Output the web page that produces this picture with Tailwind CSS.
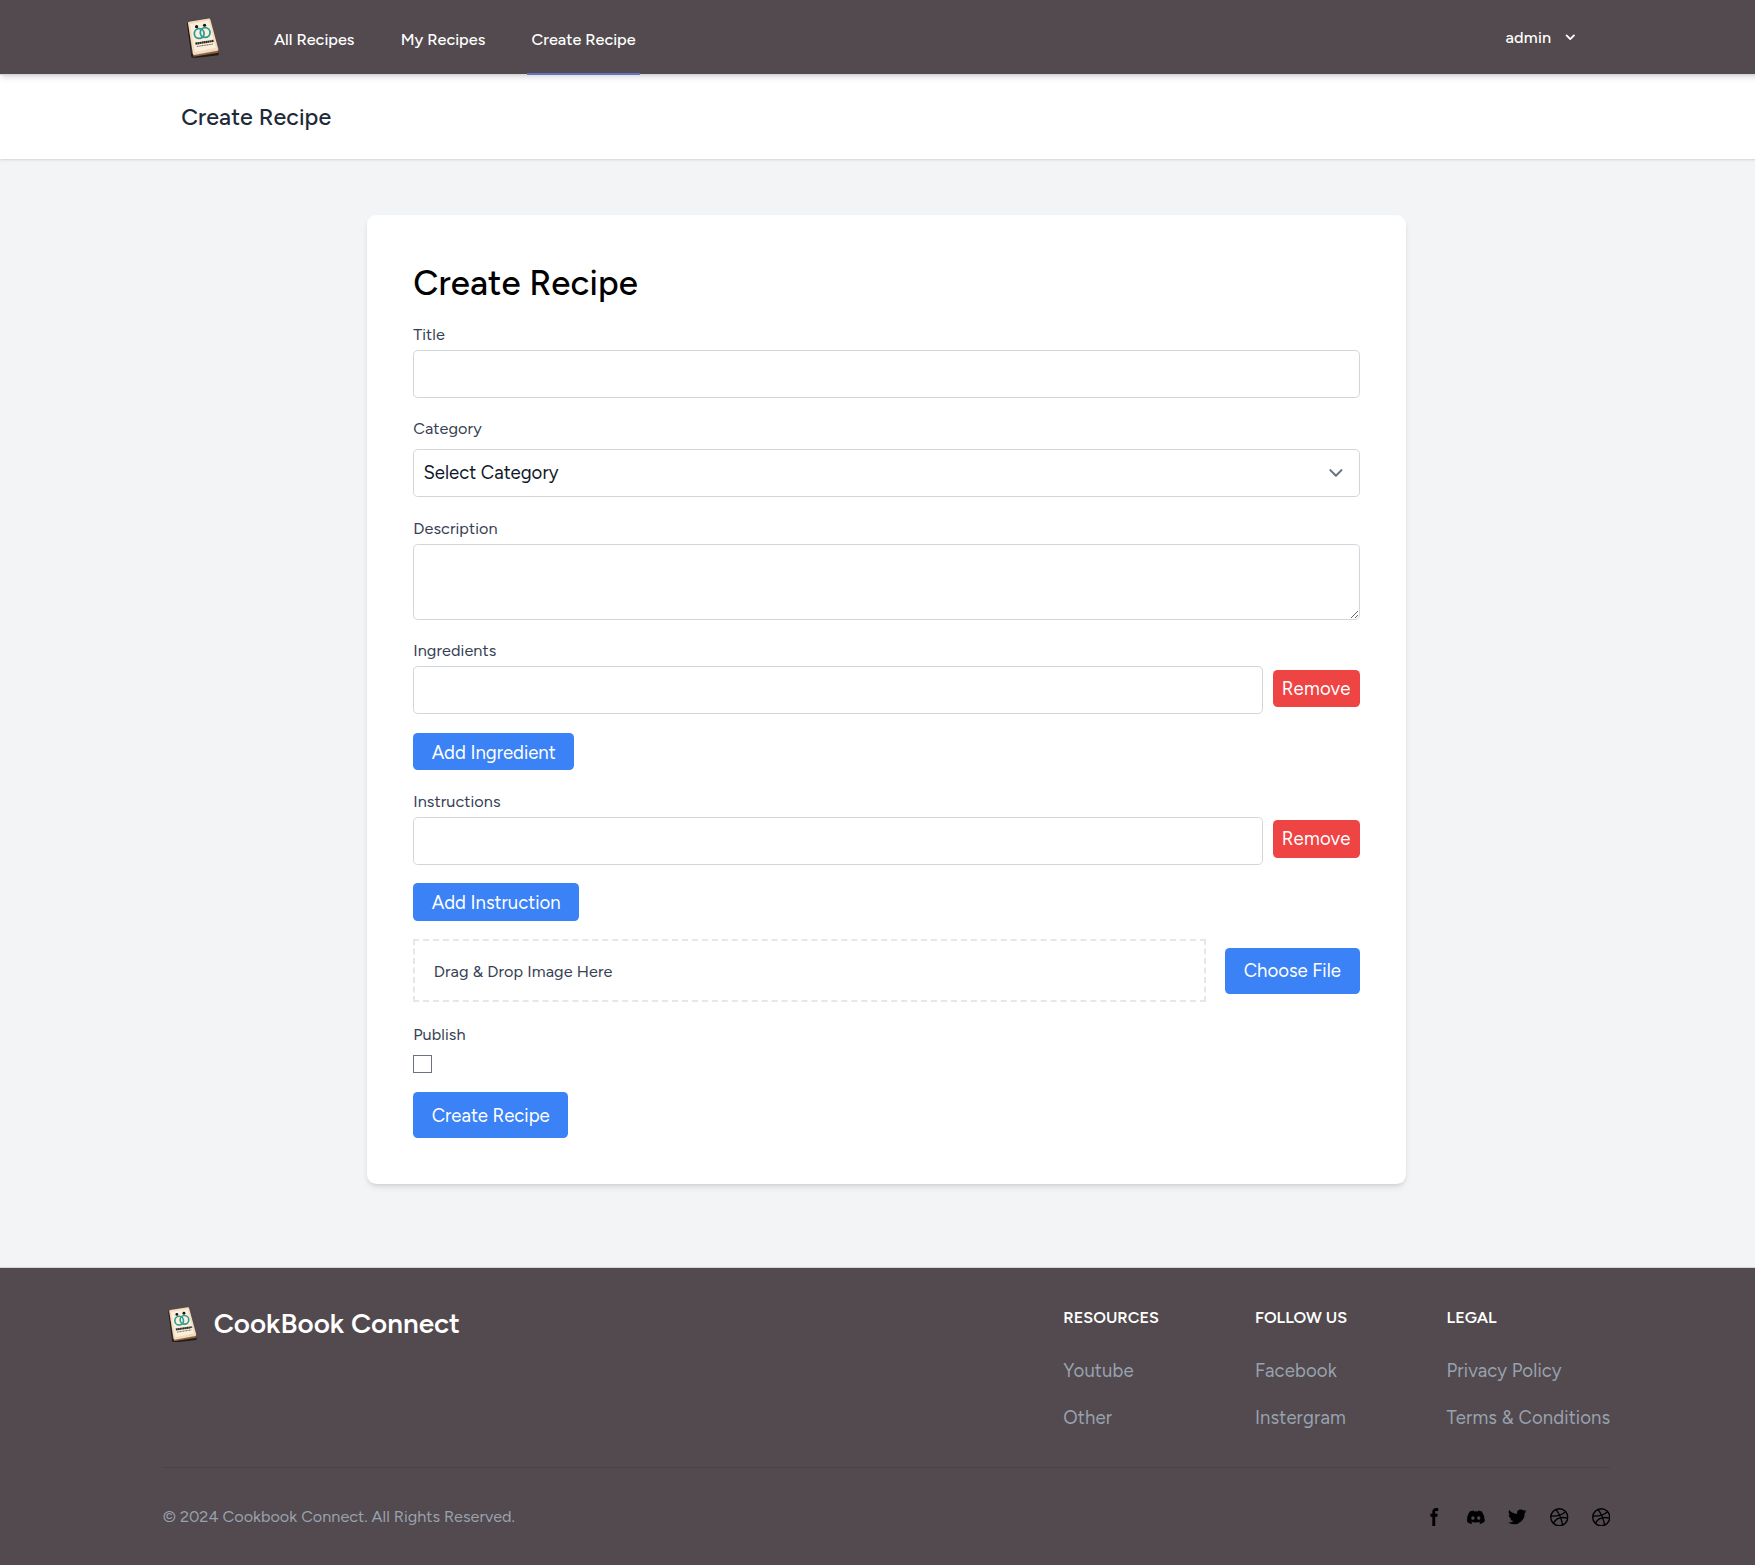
<!DOCTYPE html>
<html lang="en" class="text-[18.56px] overflow-hidden">
<head>
<meta charset="utf-8">
<title>Create Recipe</title>
<script src="https://cdn.jsdelivr.net/npm/@tailwindcss/browser@4"></script>
</head>
<body class="w-[1773px] bg-gray-100 text-black font-['Figtree',Lato,sans-serif]">
<svg class="hidden">
  <symbol id="book" viewBox="0 -1.500 42 42">
    <path d="M6 6 7.300 4.500 11 37 34 32 38.400 35 37.700 38 12.500 41 10.500 40Z" fill="#241b18"/>
    <path d="M12 37.500 37.500 33 37.800 35.500 12.500 39.500Z" fill="#8a633c"/>
    <path d="M7 5.500Q7 4.400 8.200 4.200L28 1Q29.200.8 29.500 2L37.600 32Q37.800 33.200 36.600 33.500L13.500 37.800Q12.300 38 12 36.800Z" fill="#f3dcbd"/>
    <path d="M9 6.500 28 3 35 30.500 14 35Z" fill="#fbeedb"/>
    <g fill="none" stroke="#2a9d95" stroke-width="1.800"><circle cx="18.300" cy="16.200" r="4.900"/><circle cx="24.300" cy="15.200" r="4.900"/></g>
    <circle cx="15.700" cy="9.200" r="1.600" fill="#151515"/><circle cx="23.700" cy="7.800" r="1.600" fill="#151515"/>
    <path d="M14.500 26.300 33 23.500" stroke="#2c2a27" stroke-width="2.200" stroke-dasharray="1.800 .25"/>
    <path d="M16 29.200 32 26.700" stroke="#6b6257" stroke-width="1.100" stroke-dasharray="1.200 .5"/>
  </symbol>
  <symbol id="ball" viewBox="0 0 20 20">
    <g fill="none" stroke="currentColor" stroke-width="1.500"><circle cx="10" cy="10" r="9.200"/><path d="M6.500 1.700C9.500 5.300 12.400 11.500 13.600 18.300M.9 8.700C7.500 8.900 13.500 7.500 16.800 3.900M3.600 16.500C6.500 11.200 12.500 9.300 19 10.900"/></g>
  </symbol>
</svg>

<nav class="relative bg-[#524a4e] border-b border-gray-300 shadow-md">
  <div class="max-w-7xl mx-auto px-8 h-16 flex justify-between">
    <div class="flex">
      <a class="flex items-center"><svg class="size-9"><use href="#book"/></svg></a>
      <div class="flex ml-10 gap-8 text-sm font-medium text-white -mb-px">
        <a class="flex items-center px-1 pt-[5px] border-b-2 border-transparent">All Recipes</a>
        <a class="flex items-center px-1 pt-[5px] border-b-2 border-transparent">My Recipes</a>
        <a class="flex items-center px-1 pt-[5px] border-b-2 border-[#6b6fc4]">Create Recipe</a>
      </div>
    </div>
    <button class="flex items-center pl-3 pr-[12px] text-sm font-medium text-white tracking-[0.01em]">admin
      <svg class="size-4 ml-[10px]" viewBox="0 0 20 20" fill="currentColor"><path fill-rule="evenodd" clip-rule="evenodd" d="M5.293 7.293a1 1 0 011.414 0L10 10.586l3.293-3.293a1 1 0 111.414 1.414l-4 4a1 1 0 01-1.414 0l-4-4a1 1 0 010-1.414z"/></svg>
    </button>
  </div>
</nav>

<header class="bg-white shadow-sm">
  <div class="max-w-7xl mx-auto pt-6 pb-[27px] px-8">
    <h2 class="text-xl leading-tight font-medium text-gray-800 tracking-[0.005em]">Create Recipe</h2>
  </div>
</header>

<main class="pt-[56px] pb-[82.500px]">
  <form class="max-w-4xl mx-auto bg-white rounded-lg shadow-md px-10 pt-[48px] pb-10 flex flex-col gap-4">
    <h1 class="-mb-[1.500px] text-3xl font-medium tracking-[0.004em]">Create Recipe</h1>
    <div>
      <label class="block pt-px text-sm text-gray-700 tracking-[0.005em]">Title</label>
      <input class="block mt-[3.500px] w-full p-2 border border-gray-300 rounded">
    </div>
    <div>
      <label class="block pt-px text-sm text-gray-700 tracking-[0.005em]">Category</label>
      <div class="mt-[8.300px] grid items-center">
        <select class="col-start-1 row-start-1 appearance-none w-full p-2 bg-white text-gray-900 border border-gray-300 rounded"><option>Select Category</option></select>
        <svg class="col-start-1 row-start-1 justify-self-end size-6 mr-[10px] text-gray-500" viewBox="0 0 20 20" fill="none" stroke="currentColor" stroke-width="1.500" stroke-linecap="round" stroke-linejoin="round"><path d="M6 8l4 4 4-4"/></svg>
      </div>
    </div>
    <div>
      <label class="block pt-px text-sm text-gray-700 tracking-[0.005em]">Description</label>
      <textarea rows="2" class="block mt-[3.700px] w-full p-2 border border-gray-300 rounded"></textarea>
    </div>
    <div>
      <label class="block pt-px text-sm text-gray-700 tracking-[0.005em]">Ingredients</label>
      <div class="mt-[3.500px] flex items-center gap-2">
        <input class="min-w-0 flex-1 p-2 border border-gray-300 rounded">
        <button class="mb-[3.500px] px-2 py-1 bg-[#ef4444] text-white rounded tracking-[0.01em]">Remove</button>
      </div>
      <button class="mt-4 block w-[161px] pt-[5.500px] pb-[3.800px] bg-[#3b82f6] text-white rounded">Add Ingredient</button>
    </div>
    <div>
      <label class="block pt-px text-sm text-gray-700 tracking-[0.005em]">Instructions</label>
      <div class="mt-[3.700px] flex items-center gap-2">
        <input class="min-w-0 flex-1 p-2 border border-gray-300 rounded">
        <button class="mb-[3.500px] px-2 py-1 bg-[#ef4444] text-white rounded tracking-[0.01em]">Remove</button>
      </div>
      <button class="mt-4 block w-[166px] pt-[5.500px] pb-[3.800px] bg-[#3b82f6] text-white rounded">Add Instruction</button>
    </div>
    <div class="flex items-center gap-4">
      <div class="flex-1 pt-[19px] pb-[17px] px-4 border-2 border-dashed border-gray-200 text-sm text-gray-700 tracking-[0.005em]">Drag &amp; Drop Image Here</div>
      <button class="mt-px w-[135px] py-2 bg-[#3b82f6] text-white rounded">Choose File</button>
    </div>
    <div>
      <label class="block pt-[2px] text-sm text-gray-700 tracking-[0.005em]">Publish</label>
      <input type="checkbox" class="block mt-[8.500px] appearance-none size-4 bg-white border border-gray-500">
    </div>
    <button class="self-start w-[155px] pt-[10px] pb-[8.600px] bg-[#3b82f6] text-white rounded">Create Recipe</button>
  </form>
</main>

<footer class="bg-[#524a4e] border-t border-gray-300">
  <div class="max-w-7xl mx-auto px-4 py-8">
    <div class="flex justify-between">
      <a class="flex items-center self-start"><svg class="size-8"><use href="#book"/></svg><span class="ml-3 text-2xl font-semibold text-white">CookBook Connect</span></a>
      <div class="pt-px grid grid-cols-3 gap-6 w-[547px]">
        <div>
          <h2 class="mb-6 text-sm font-semibold text-white uppercase">Resources</h2>
          <ul class="flex flex-col gap-4 text-gray-400 tracking-[0.006em]"><li>Youtube</li><li>Other</li></ul>
        </div>
        <div>
          <h2 class="mb-6 text-sm font-semibold text-white uppercase">Follow us</h2>
          <ul class="flex flex-col gap-4 text-gray-400 tracking-[0.006em]"><li>Facebook</li><li>Instergram</li></ul>
        </div>
        <div class="whitespace-nowrap">
          <h2 class="mb-6 text-sm font-semibold text-white uppercase">Legal</h2>
          <ul class="flex flex-col gap-4 text-gray-400 tracking-[0.006em]"><li>Privacy Policy</li><li>Terms &amp; Conditions</li></ul>
        </div>
      </div>
    </div>
    <hr class="mt-[36px] mb-8 border-[#49434b]">
    <div class="flex items-center justify-between">
      <span class="text-sm text-gray-400">© 2024 Cookbook Connect. All Rights Reserved.</span>
      <div class="flex gap-5">
        <svg class="size-4" viewBox="0 0 8 19"><path d="M6.135 3H8V0H6.135a4.147 4.147 0 0 0-4.142 4.142V6H0v3h2v9.938h3V9h2.021l.592-3H5V3.591A.6.6 0 0 1 5.592 3h.543Z"/></svg>
        <svg class="size-4" viewBox="0 0 21 16"><path d="M16.942 1.556a16.3 16.3 0 0 0-4.126-1.3 12.04 12.04 0 0 0-.529 1.1 15.175 15.175 0 0 0-4.573 0 11.585 11.585 0 0 0-.535-1.1 16.274 16.274 0 0 0-4.129 1.3A17.392 17.392 0 0 0 .182 13.218a15.785 15.785 0 0 0 4.963 2.521c.41-.564.773-1.16 1.084-1.785a10.63 10.63 0 0 1-1.706-.83c.143-.106.283-.217.418-.33a11.664 11.664 0 0 0 10.118 0c.137.113.277.224.418.33-.544.328-1.116.606-1.71.832a12.52 12.52 0 0 0 1.084 1.785 16.46 16.46 0 0 0 5.064-2.595 17.286 17.286 0 0 0-2.973-11.39ZM6.678 10.813a1.941 1.941 0 0 1-1.800-2.045 1.930 1.930 0 0 1 1.800-2.047 1.919 1.919 0 0 1 1.800 2.047 1.930 1.930 0 0 1-1.800 2.045Zm6.644 0a1.940 1.940 0 0 1-1.800-2.045 1.930 1.930 0 0 1 1.800-2.047 1.918 1.918 0 0 1 1.800 2.047 1.930 1.930 0 0 1-1.800 2.045Z"/></svg>
        <svg class="size-4" viewBox="0 0 20 17"><path d="M20 1.892a8.178 8.178 0 0 1-2.355.635 4.074 4.074 0 0 0 1.800-2.235 8.344 8.344 0 0 1-2.605.98A4.130 4.130 0 0 0 13.850 0a4.068 4.068 0 0 0-4.100 4.038 4 4 0 0 0 .105.919A11.705 11.705 0 0 1 1.400.734a4.006 4.006 0 0 0 1.268 5.392 4.165 4.165 0 0 1-1.859-.5v.05A4.057 4.057 0 0 0 4.100 9.635a4.190 4.190 0 0 1-1.856.07 4.108 4.108 0 0 0 3.831 2.807A8.360 8.360 0 0 1 0 14.184 11.732 11.732 0 0 0 6.291 16 11.502 11.502 0 0 0 17.964 4.500c0-.177 0-.35-.012-.523A8.143 8.143 0 0 0 20 1.892Z"/></svg>
        <svg class="size-4"><use href="#ball"/></svg>
        <svg class="size-4"><use href="#ball"/></svg>
      </div>
    </div>
  </div>
</footer>
</body>
</html>
